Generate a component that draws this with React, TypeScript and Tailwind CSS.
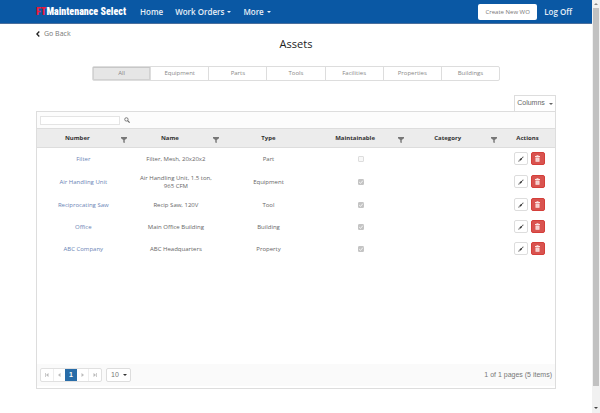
import clsx from "clsx";

type Asset = { number: string; name: string; type: string; maintainable: boolean };

const assets: Asset[] = [
  { number: "Filter", name: "Filter, Mesh, 20x20x2", type: "Part", maintainable: false },
  { number: "Air Handling Unit", name: "Air Handling Unit, 1.5 ton, 965 CFM", type: "Equipment", maintainable: true },
  { number: "Reciprocating Saw", name: "Recip Saw, 120V", type: "Tool", maintainable: true },
  { number: "Office", name: "Main Office Building", type: "Building", maintainable: true },
  { number: "ABC Company", name: "ABC Headquarters", type: "Property", maintainable: true },
];

const tabs = ["All", "Equipment", "Parts", "Tools", "Facilities", "Properties", "Buildings"];

const columns = [
  { title: "Number", filter: true },
  { title: "Name", filter: true },
  { title: "Type", filter: false },
  { title: "Maintainable", filter: true },
  { title: "Category", filter: true },
];

function Caret({ className }: { className?: string }) {
  return (
    <svg viewBox="0 0 4 2" className={clsx("h-[2px] w-1 fill-current", className)}>
      <path d="M0 0h4L2 2z" />
    </svg>
  );
}

function FilterIcon() {
  return (
    <svg viewBox="0 0 10 10" className="h-[6px] w-[6px] fill-[#777]">
      <path d="M0 0h10v2L6.2 5V10L3.8 9V5L0 2z" />
    </svg>
  );
}

function PencilIcon() {
  return (
    <svg viewBox="0 0 12 12" className="h-[6px] w-[6px] fill-[#333]">
      <path d="M0.3 11.7l1.8-3.6 1.8 1.8zM2.8 7.2l4-3.8 1.9 1.9-3.8 4zM8 2.6L10.2.8l1 1L9.4 4z" />
    </svg>
  );
}

function TrashIcon() {
  return (
    <svg viewBox="0 0 10 14" className="h-[7px] w-[5px] fill-[#fbe3e2]">
      <path d="M0 2h3V.5h4V2h3v2H0zM1 5h8v8.5H1z" />
      <path d="M3.3 6.5v5.5M5 6.5v5.5M6.7 6.5v5.5" stroke="#e9a5a2" strokeWidth=".6" />
    </svg>
  );
}

function PagerIcon({ bar, flip }: { bar?: boolean; flip?: boolean }) {
  return (
    <svg viewBox="0 0 8 8" className={clsx("h-1 w-1 fill-[#bbb]", flip && "rotate-180")}>
      {bar && <path d="M0 0h1.5v8H0z" />}
      <path d="M7 0v8L2 4z" />
    </svg>
  );
}

function NavBar() {
  return (
    <header className="flex h-6 items-center border-b border-[#4b6f9c] bg-[#0a58a4] pr-5 pl-9 text-[8px] font-semibold text-[#e8eff7]">
      <a href="#" className="w-[92px] font-[Impact,'Roboto_Condensed','Open_Sans_Condensed',Roboto,sans-serif] text-[10px] font-black whitespace-nowrap text-white">
        <span className="text-[#f0183a]">FT</span>Maintenance Select
      </a>
      <nav className="ml-3 flex gap-3 whitespace-nowrap">
        <a href="#">Home</a>
        <a href="#" className="flex items-center gap-[3px]">Work Orders<Caret /></a>
        <a href="#" className="flex items-center gap-[3px]">More<Caret /></a>
      </nav>
      <button className="ml-auto h-4 w-[59px] rounded-[2px] bg-white text-[6px] leading-[8px] font-normal whitespace-nowrap text-[#777]">Create New WO</button>
      <a href="#" className="ml-[7px] whitespace-nowrap">Log Off</a>
    </header>
  );
}

function AssetTable() {
  return (
    <table className="w-full table-fixed border-collapse text-center text-[6px] leading-[8px] text-[#666]">
      <colgroup>
        {columns.map((column) => <col key={column.title} />)}
        <col className="w-[55px]" />
      </colgroup>
      <thead className="bg-[#ececec] font-bold text-[#333]">
        <tr className="h-[19px] border-y border-[#ddd]">
          {columns.map((column) => (
            <th key={column.title} scope="col">
              <div className={clsx("flex items-center", column.filter && "pr-[3px]")}>
                <span className="flex-1">{column.title}</span>
                {column.filter && <button aria-label={`Filter ${column.title}`} className="flex w-[9px] justify-end pt-[3px]"><FilterIcon /></button>}
              </div>
            </th>
          ))}
          <th scope="col">Actions</th>
        </tr>
      </thead>
      <tbody>
        {assets.map((asset) => (
          <tr key={asset.number} className="h-[22px]">
            <td><a href="#" className="text-[#6a84b5]">{asset.number}</a></td>
            <td className="px-2 py-1">{asset.name}</td>
            <td>{asset.type}</td>
            <td>
              <span className="relative mx-auto block h-[6px] w-[6px]">
                <input
                  type="checkbox"
                  aria-label={`${asset.number} maintainable`}
                  disabled
                  checked={asset.maintainable}
                  readOnly
                  className="block h-[6px] w-[6px] appearance-none rounded-[1px] border border-[#ddd] bg-[#f8f8f8] checked:border-[#c4c4c4] checked:bg-[#c4c4c4]"
                />
                {asset.maintainable && (
                  <svg viewBox="0 0 6 6" className="absolute inset-0 h-[6px] w-[6px] fill-none stroke-white">
                    <path d="M1.2 3.1l1.3 1.3L4.9 1.6" strokeWidth=".8" />
                  </svg>
                )}
              </span>
            </td>
            <td />
            <td>
              <div className="flex justify-center gap-[3px] pl-[3px]">
                <button aria-label={`Edit ${asset.number}`} className="flex h-[13px] w-[14px] items-center justify-center rounded-[2px] border border-[#ddd] bg-white"><PencilIcon /></button>
                <button aria-label={`Delete ${asset.number}`} className="flex h-[13px] w-[14px] items-center justify-center rounded-[2px] border border-[#d43f3a] bg-[#d9534f]"><TrashIcon /></button>
              </div>
            </td>
          </tr>
        ))}
      </tbody>
    </table>
  );
}

function Pager() {
  return (
    <footer className="mt-auto mb-[2px] flex h-[22px] items-center bg-[#fafafa] px-[3px] font-['Liberation_Sans',sans-serif] text-[7px] text-[#777]">
      <div className="flex h-[14px] w-[62px] rounded-[2px] border border-[#e0e0e0] bg-white">
        <button aria-label="First page" className="flex flex-1 items-center justify-center border-r border-[#eee]"><PagerIcon bar /></button>
        <button aria-label="Previous page" className="flex flex-1 items-center justify-center"><PagerIcon /></button>
        <button aria-current="page" className="flex-1 bg-[#286ca8] font-bold text-white">1</button>
        <button aria-label="Next page" className="flex flex-1 items-center justify-center border-r border-[#eee]"><PagerIcon flip /></button>
        <button aria-label="Last page" className="flex flex-1 items-center justify-center"><PagerIcon bar flip /></button>
      </div>
      <div className="relative ml-1">
        <select aria-label="Page size" defaultValue="10" className="h-[14px] w-[25px] appearance-none rounded-[2px] border border-[#ddd] bg-white pl-1">
          <option>10</option>
          <option>20</option>
        </select>
        <Caret className="pointer-events-none absolute top-[6px] right-1 text-[#333]" />
      </div>
      <span className="ml-auto">1 of 1 pages (5 items)</span>
    </footer>
  );
}

function ScrollBar() {
  return (
    <div aria-hidden="true" className="flex w-2 shrink-0 flex-col items-center bg-[#f1f1f1]">
      <div className="flex h-2 items-center"><Caret className="rotate-180 text-[#888]" /></div>
      <div className="w-[6px] flex-1 bg-[#c1c1c1]" />
      <div className="flex h-[27px] items-end pb-1"><Caret className="text-[#444]" /></div>
    </div>
  );
}

export default function App() {
  return (
    <div className="flex min-h-screen bg-white font-['Open_Sans','Noto_Sans',sans-serif] text-[#666]">
      <div className="flex min-w-0 flex-1 flex-col">
        <NavBar />
        <main className="flex flex-1 flex-col pt-1 pr-9 pb-6 pl-9">
          <a href="#" className="flex h-3 items-center gap-1 text-[7px] text-[#777]">
            <svg viewBox="0 0 4 6" className="h-[6px] w-1 fill-none stroke-[#222]"><path d="M3.3.5L.9 3l2.4 2.5" strokeWidth="1.3" /></svg>
            Go Back
          </a>
          <h1 className="text-center text-[11px] leading-[8px] text-[#222]">Assets</h1>
          <div className="mx-14 mt-[18px] flex h-[15px] rounded-[2px] border border-[#ddd] text-[6px] text-[#888]">
            {tabs.map((tab, i) => (
              <button key={tab} className={clsx("flex-1", i === 0 ? "bg-[#e6e6e6] inset-shadow-2xs ring-1 ring-[#d2d2d2] ring-inset" : "border-l border-[#ddd]")}>{tab}</button>
            ))}
          </div>
          <button className="mt-[14px] flex h-4 w-[42px] items-center justify-center gap-1 self-end border border-b-0 border-[#ddd] font-['Liberation_Sans',sans-serif] text-[7px]">
            Columns<Caret />
          </button>
          <section className="flex flex-1 flex-col border border-[#ddd]">
            <div className="flex h-4 items-center gap-1 bg-[#fcfcfc] px-[3px]">
              <input type="search" aria-label="Search assets" className="h-[9px] w-20 border border-[#e4e4e4] bg-white text-[6px]" />
              <button aria-label="Search">
                <svg viewBox="0 0 10 10" className="h-[6px] w-[6px] fill-none stroke-[#666]"><circle cx="4" cy="4" r="2.8" strokeWidth="1.4" /><path d="M6 6l3.4 3.4" strokeWidth="1.9" /></svg>
              </button>
            </div>
            <AssetTable />
            <Pager />
          </section>
        </main>
      </div>
      <ScrollBar />
    </div>
  );
}
